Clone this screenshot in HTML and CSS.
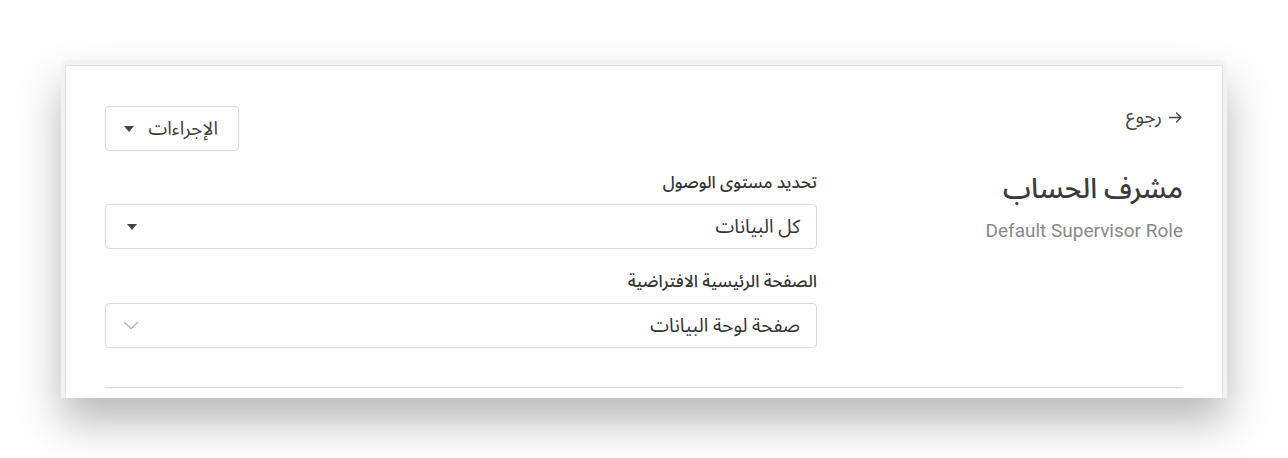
FILE: index.html
```html
<!DOCTYPE html>
<html lang="ar" dir="rtl">
<head>
    <meta charset="UTF-8">
    <meta name="viewport" content="width=device-width, initial-scale=1.0">
    <title>مشرف الحساب</title>
    <link rel="stylesheet" href="styles.css">
</head>
<body>
    <div class="frame">
        <div class="card">
            <div class="top-bar">
                <a class="back-link" href="#">
                    <svg width="15" height="15" viewBox="0 0 15 15" aria-hidden="true">
                        <path d="M1.5 7.5h11.5M8.5 3l4.5 4.5-4.5 4.5" fill="none" stroke="#444" stroke-width="1.3" stroke-linecap="round" stroke-linejoin="round"/>
                    </svg>
                    <span>رجوع</span>
                </a>
                <button class="actions-btn" type="button">
                    <span>الإجراءات</span>
                    <span class="caret"></span>
                </button>
            </div>

            <div class="role-layout">
                <div class="role-info">
                    <h1>مشرف الحساب</h1>
                    <p class="role-sub">Default Supervisor Role</p>
                </div>

                <form class="role-form">
                    <div class="form-group">
                        <label>تحديد مستوى الوصول</label>
                        <div class="select-box">
                            <span>كل البيانات</span>
                            <span class="caret"></span>
                        </div>
                    </div>
                    <div class="form-group">
                        <label>الصفحة الرئيسية الافتراضية</label>
                        <div class="select-box">
                            <span>صفحة لوحة البيانات</span>
                            <svg class="chevron" width="16" height="9" viewBox="0 0 16 9" aria-hidden="true">
                                <path d="M1 1l7 6.5L15 1" fill="none" stroke="#b5b5b5" stroke-width="1.3"/>
                            </svg>
                        </div>
                    </div>
                </form>
            </div>

            <hr class="divider">
        </div>
    </div>
</body>
</html>
```

FILE: styles.css
```css
body {
    margin: 0;
    padding: 0;
    background: #ffffff;
    font-family: Roboto, "Noto Sans Arabic", "Noto Sans", "DejaVu Sans", sans-serif;
    color: #3d3d3d;
    height: 458px;
    overflow: hidden;
}

/* Window frame */
.frame {
    margin: 60px auto 0;
    width: 1166px;
    height: 338px;
    box-sizing: border-box;
    padding: 5px 4px 0 4px;
    background: #f2f2f2;
    border-radius: 8px 8px 0 0;
    box-shadow: 0 24px 44px rgba(0, 0, 0, 0.28);
}

.card {
    height: 100%;
    box-sizing: border-box;
    background: #fff;
    border: 1px solid #e1e1e1;
    border-bottom: none;
    border-radius: 3px 3px 0 0;
    padding: 40px 39px 0 39px;
}

.top-bar {
    display: flex;
    justify-content: space-between;
    align-items: flex-start;
}

.back-link {
    display: flex;
    align-items: center;
    gap: 6px;
    font-size: 19px;
    color: #444;
    text-decoration: none;
    line-height: 22px;
}

.actions-btn {
    display: flex;
    align-items: center;
    gap: 14px;
    height: 45px;
    width: 134px;
    padding: 0 20px 0 0;
    border: 1px solid #dcdcdc;
    border-radius: 4px;
    background: #fff;
    font-family: inherit;
    font-size: 19px;
    color: #3d3d3d;
}

.caret {
    width: 0;
    height: 0;
    border-left: 5px solid transparent;
    border-right: 5px solid transparent;
    border-top: 6px solid #444;
}

.role-layout {
    display: grid;
    grid-template-columns: 1fr 712px;
    margin-top: 20px;
}

.role-info h1 {
    margin: 2px 0 0;
    font-size: 28px;
    font-weight: 500;
    line-height: 32px;
    color: #3a3a3a;
}

.role-sub {
    margin: 14px 0 0;
    font-size: 19px;
    line-height: 24px;
    color: #888;
    direction: ltr;
    text-align: right;
}

.form-group {
    margin-bottom: 21px;
}

.form-group label {
    display: block;
    font-size: 17px;
    font-weight: 500;
    line-height: 23px;
    margin-bottom: 10px;
    color: #333;
}

.select-box {
    display: flex;
    justify-content: space-between;
    align-items: center;
    height: 45px;
    box-sizing: border-box;
    padding: 0 16px 0 21px;
    border: 1px solid #dcdcdc;
    border-radius: 4px;
    font-size: 19px;
    color: #333;
}

.select-box .chevron {
    margin-left: -4px;
}

.divider {
    margin: 18px 0 0;
    border: none;
    border-top: 1px solid #d6d6d6;
}
```
